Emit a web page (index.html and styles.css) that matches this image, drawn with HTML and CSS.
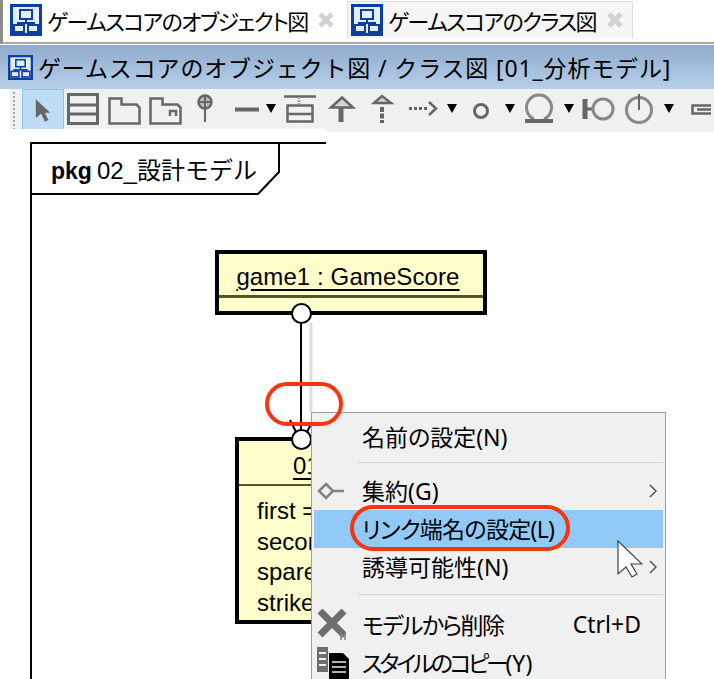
FILE: index.html
```html
<!DOCTYPE html>
<html lang="ja">
  <head>
    <meta charset="UTF-8" />
    <title>ゲームスコアのオブジェクト図</title>
    <link rel="stylesheet" href="styles.css">
  </head>
  <body>
    <svg class="defs" width="0" height="0">
      <symbol id="diagram" viewBox="0 0 32 32">
        <rect x="1.5" y="1.5" width="29" height="29" fill="#e4edf9" stroke="#0b3fa3" stroke-width="3" />
        <g fill="none" stroke="#0b3fa3" stroke-width="2">
          <rect x="10" y="6" width="12" height="9" />
          <path d="M16 15v4M8 21v-2h16v2" />
          <rect x="4" y="21" width="10" height="7" />
          <rect x="18" y="21" width="10" height="7" />
        </g>
      </symbol>
      <symbol id="close" viewBox="0 0 16 16">
        <path d="M2 2l12 12M14 2L2 14" stroke="#d2d2d2" stroke-width="5" />
      </symbol>
      <symbol id="drop" viewBox="0 0 10 9">
        <path d="M0 0h10L5 9z" fill="#000" />
      </symbol>
    </svg>

    <div class="app">
      <div class="tabs">
        <div class="tab tab-active">
          <svg class="tab-icon"><use href="#diagram" /></svg>
          <span class="tab-label">ゲームスコアのオブジェクト図</span>
          <svg class="tab-close"><use href="#close" /></svg>
        </div>
        <div class="tab tab-other">
          <svg class="tab-icon"><use href="#diagram" /></svg>
          <span class="tab-label">ゲームスコアのクラス図</span>
          <svg class="tab-close"><use href="#close" /></svg>
        </div>
      </div>

      <div class="titlebar">
        <svg class="title-icon"><use href="#diagram" /></svg>
        <span class="title-text">ゲームスコアのオブジェクト図 / クラス図 [01_分析モデル]</span>
      </div>

      <div class="toolbar">
        <span class="grip"></span>
        <span class="tool-selected">
          <svg width="18" height="24" viewBox="0 0 20 26"><path d="M2 1l16 15h-6l4 8-4 2-4-9-6 5z" fill="#666" /></svg>
        </span>
        <svg class="tool" width="44" height="40" viewBox="64 90 44 40"><path d="M68.500 95.500h29v29h-29zM68.500 106h29M68.500 115h29" /></svg>
        <svg class="tool" width="41" height="40" viewBox="108 90 41 40"><path d="M109.500 124.500v-25h12v6h15l3 3v16z" stroke-width="2.500" /></svg>
        <svg class="tool" width="41" height="40" viewBox="149 90 41 40"><path d="M150.500 124.500v-25h12v6h15l3 3v16zM170 117v-5h6v5" stroke-width="2.500" /></svg>
        <svg class="tool" width="36" height="40" viewBox="190 90 36 40"><circle cx="205" cy="103" r="6.500" fill="#bbb" stroke-width="2.500" /><path d="M205 109v14M199 103h12M205 97v12" stroke-width="2" /></svg>
        <svg class="tool" width="40" height="40" viewBox="226 90 40 40"><path d="M235 110.500h24" stroke-width="4" /></svg>
        <svg class="drop"><use href="#drop" /></svg>
        <svg class="tool" width="43" height="40" viewBox="281 90 43 40"><path d="M289 97.500h32" stroke-width="2.500" /><path d="M304 98v7" stroke="#aaa" stroke-width="3" stroke-dasharray="2 1" /><path d="M292.500 106.500h25v16h-25zM292.500 115h25" stroke-width="2.500" /></svg>
        <svg class="tool" width="40" height="40" viewBox="324 90 40 40"><path d="M336 108.500l11-10 11 10z" fill="#d4d4d4" stroke-width="2.500" /><path d="M346 109v14" stroke-width="5" /></svg>
        <svg class="tool" width="44" height="40" viewBox="364 90 44 40"><path d="M379 104l8-7 9 7z" fill="#d4d4d4" stroke-width="2.500" /><path d="M387 108v16" stroke-width="4" stroke-dasharray="5 1.500" /></svg>
        <svg class="tool" width="44" height="40" viewBox="408 90 44 40"><path d="M414 109.500h20" stroke-width="3" stroke-dasharray="3 2" /><path d="M434 103l7 6.500-7 6.500" stroke-width="2.500" /></svg>
        <svg class="drop"><use href="#drop" /></svg>
        <svg class="tool" width="48" height="40" viewBox="462 90 48 40"><circle cx="486" cy="112" r="6.500" /></svg>
        <svg class="drop"><use href="#drop" /></svg>
        <svg class="tool" width="49" height="40" viewBox="520 90 49 40"><path d="M539 120a12.500 12.500 0 1 1 10 0" stroke="#888" /><path d="M530 122h28" stroke-width="4" /></svg>
        <svg class="drop"><use href="#drop" /></svg>
        <svg class="tool" width="50" height="40" viewBox="578 90 50 40"><path d="M589 100v20" stroke-width="5" /><path d="M590 110h7" /><circle cx="607" cy="110" r="10" stroke="#888" /></svg>
        <svg class="tool" width="40" height="40" viewBox="628 90 40 40"><circle cx="643" cy="111" r="12.500" stroke="#888" /><path d="M643 95v16" stroke-width="2" /></svg>
        <svg class="drop"><use href="#drop" /></svg>
        <svg class="tool" width="37" height="40" viewBox="677 90 37 40"><path d="M695.500 106.500h30v8h-30zM700 110.500h20" stroke-width="2.500" /></svg>
      </div>

      <div class="canvas">
        <span class="canvas-top"></span>
        <svg class="frame" width="714" height="548" viewBox="0 131 714 548">
          <path d="M31 679V143h295" />
          <path d="M279 143v29l-21 22H31" />
          <path d="M311 323v89" class="shadow" />
          <path d="M301 320v110M290 420l6 12M311 424l-4 8" class="link" />
        </svg>

        <div class="pkg-name"><b>pkg</b><span class="pkg-title">02_設計モデル</span></div>

        <div class="node node-game">
          <div class="node-head"><u>game1 : GameScore</u></div>
        </div>
        <div class="node node-frame">
          <div class="node-head"><u>01</u></div>
          <div class="node-attrs">
            <div>first =</div>
            <div>second</div>
            <div>spare</div>
            <div>strike</div>
          </div>
        </div>
        <span class="port port-top"></span>
        <span class="port port-bottom"></span>
        <span class="mark mark-link"></span>
      </div>

      <div class="menu">
        <div class="menu-item">
          <span class="menu-icon"></span>
          <span class="menu-label">名前の設定(N)</span>
        </div>
        <div class="menu-sep"></div>
        <div class="menu-item">
          <span class="menu-icon">
            <svg width="28" height="18" viewBox="0 0 28 18"><path d="M9 2l7 7-7 7-7-7zM16 9h11" fill="none" stroke="#808080" stroke-width="2.500" /></svg>
          </span>
          <span class="menu-label">集約(G)</span>
          <svg class="menu-arrow" width="8" height="14" viewBox="0 0 8 14"><path d="M1 1l6 6-6 6" /></svg>
        </div>
        <div class="menu-item menu-item-active">
          <span class="menu-icon"></span>
          <span class="menu-label label-link">リンク端名の設定(L)</span>
        </div>
        <div class="menu-item">
          <span class="menu-icon"></span>
          <span class="menu-label">誘導可能性(N)</span>
          <svg class="menu-arrow" width="8" height="14" viewBox="0 0 8 14"><path d="M1 1l6 6-6 6" /></svg>
        </div>
        <div class="menu-sep menu-sep-wide"></div>
        <div class="menu-item">
          <span class="menu-icon">
            <svg width="32" height="32" viewBox="0 0 32 32"><path d="M3 2l24 24M27 2L3 26" stroke="#6e6e6e" stroke-width="7" /><path d="M24 31v-6l2 3 2-3v6" fill="none" stroke="#808080" stroke-width="1.500" /></svg>
          </span>
          <span class="menu-label label-delete">モデルから削除</span>
          <span class="menu-key">Ctrl+D</span>
        </div>
        <div class="menu-item">
          <span class="menu-icon">
            <svg width="32" height="32" viewBox="0 0 32 32"><path d="M0 0h11v25H0z" fill="#6e6e6e" /><path d="M2 6h7M2 12h7M2 18h7" stroke="#f0f0f0" stroke-width="2" /><path d="M12 6h14l6 6v20H12z" fill="#000" /><path d="M15 15h14M15 20h14M15 25h14" stroke="#f0f0f0" stroke-width="1.500" /></svg>
          </span>
          <span class="menu-label label-copy">スタイルのコピー<span class="label-key">(Y)</span></span>
        </div>
      </div>

      <span class="mark mark-item"></span>
      <svg class="pointer" width="26" height="38" viewBox="0 0 26 38"><path d="M1 1v33l8-7 6 10 5-3-6-10h11z" fill="#fff" stroke="#444" stroke-width="1.200" /></svg>
    </div>
  </body>
</html>
```

FILE: styles.css
```css
* {
  box-sizing: border-box;
}
html,
body {
  margin: 0;
  background: #fff;
}
.defs {
  position: absolute;
}
.app {
  position: relative;
  width: 714px;
  height: 679px;
  overflow: hidden;
  display: flex;
  flex-direction: column;
  font-family: "Noto Sans", "Noto Sans CJK JP", sans-serif;
  color: #000;
}

/* tabs */
.tabs {
  height: 44px;
  display: flex;
  gap: 7px;
  padding-left: 3px;
  border-left: 3px solid #8c8c8c;
  border-bottom: 2px solid #a9a9a9;
  margin-bottom: 1px;
}
.tab {
  display: flex;
  align-items: center;
  height: 37px;
  margin-top: 1px;
}
.tab-active {
  width: 334px;
  padding-left: 4px;
}
.tab-other {
  width: 286px;
  padding-left: 3px;
  background: #f5f5f5;
  border: 1px solid #dedede;
  border-bottom: 0;
}
.tab-icon {
  width: 32px;
  height: 32px;
  flex: none;
}
.tab-label {
  width: 265px;
  font-size: 22px;
  font-feature-settings: "palt";
  letter-spacing: -1.6px;
  margin-left: 5px;
  white-space: nowrap;
}
.tab-other .tab-label {
  width: 213px;
}
.tab-close {
  width: 16px;
  height: 16px;
  margin-left: 6px;
  flex: none;
}

/* window title */
.titlebar {
  height: 44px;
  display: flex;
  align-items: center;
  gap: 5px;
  padding-left: 8px;
  background: linear-gradient(#8fabcb, #b6cfea);
}
.title-icon {
  width: 25px;
  height: 25px;
  flex: none;
}
.title-text {
  font-size: 23px;
  letter-spacing: 0.85px;
  white-space: nowrap;
}

/* palette */
.toolbar {
  height: 43px;
  margin-bottom: -1px;
  display: flex;
  align-items: flex-start;
  margin-left: 10px;
  background: #f0f0f0;
}
.grip {
  width: 12px;
  height: 40px;
  margin-top: 2px;
  background: radial-gradient(circle, #a8a8a8 1px, transparent 1.2px) 2px 0 / 4px 4px repeat-y;
}
.tool-selected {
  width: 42px;
  height: 41px;
  flex: none;
  display: flex;
  align-items: center;
  justify-content: center;
  background: #bfdcf5;
  border: 1px solid #8cc4f5;
}
.tool {
  flex: none;
  fill: none;
  stroke: #666;
  stroke-width: 3;
}
.drop {
  width: 10px;
  height: 9px;
  flex: none;
  margin-top: 15px;
}

/* diagram */
.canvas {
  position: relative;
  flex: 1;
}
.canvas-top {
  position: absolute;
  left: 10px;
  top: -2px;
  width: 316px;
  height: 3px;
  background: #fff;
}
.frame {
  position: absolute;
  left: 0;
  top: 0;
  fill: none;
  stroke: #000;
  stroke-width: 2;
}
.frame .shadow {
  stroke: #dcdcdc;
  stroke-width: 3;
}
.pkg-name {
  position: absolute;
  left: 51px;
  top: 25px;
  font-family: "Liberation Sans", "Noto Sans CJK JP", sans-serif;
  font-size: 24px;
  line-height: 30px;
  white-space: nowrap;
}
.pkg-name b {
  font-size: 23px;
}
.pkg-title {
  margin-left: 5px;
}
.node {
  position: absolute;
  background: #ffffcc;
  border: 4px solid #000;
  font-family: "Liberation Sans", sans-serif;
  font-size: 24px;
}
.node u {
  text-underline-offset: 4px;
}
.node-game {
  left: 215px;
  top: 119px;
  width: 272px;
  height: 65px;
}
.node-game .node-head {
  height: 44px;
  padding-right: 6px;
  border-bottom: 3px solid #55552a;
  text-align: center;
  line-height: 46px;
  letter-spacing: 0.1px;
}
.node-frame {
  left: 235px;
  top: 306px;
  width: 200px;
  height: 187px;
}
.node-frame .node-head {
  height: 45px;
  border-bottom: 2px solid #55552a;
  padding-left: 54px;
  line-height: 50px;
}
.node-attrs {
  padding: 10px 0 0 18px;
  line-height: 30.500px;
}
.port {
  position: absolute;
  width: 21px;
  height: 21px;
  border-radius: 50%;
  background: #fff;
  border: 2px solid #000;
}
.port-top {
  left: 291px;
  top: 172px;
}
.port-bottom {
  left: 291px;
  top: 298px;
}
.mark {
  position: absolute;
  border: 4px solid #fb3410;
}
.mark-link {
  left: 265px;
  top: 251px;
  width: 78px;
  height: 44px;
  border-radius: 22px;
  z-index: 2;
}
.mark-item {
  left: 350px;
  top: 505px;
  width: 220px;
  height: 46px;
  border-radius: 23px;
  z-index: 2;
}

/* context menu */
.menu {
  position: absolute;
  left: 311px;
  top: 412px;
  width: 355px;
  height: 280px;
  padding: 5px 2px 0;
  background: #f0f0f0;
  border: 1px solid #a0a0a0;
}
.menu-item {
  display: flex;
  align-items: center;
  height: 38px;
  font-size: 23px;
  font-feature-settings: "palt";
  white-space: nowrap;
}
.menu-item-active {
  background: #91c9f7;
}
.menu-icon {
  width: 48px;
  flex: none;
  display: flex;
  align-items: center;
  padding-left: 3px;
}
.menu-label {
  flex: 1;
  padding-bottom: 2px;
}
.label-link {
  letter-spacing: -0.7px;
}
.label-delete {
  letter-spacing: -1.7px;
}
.label-copy {
  letter-spacing: -3.4px;
}
.label-key {
  letter-spacing: 0;
}
.menu-key {
  margin-right: 22px;
  padding-bottom: 2px;
}
.menu-arrow {
  margin-right: 6px;
  fill: none;
  stroke: #555;
  stroke-width: 1.500;
}
.menu-sep {
  height: 16px;
  margin-left: 44px;
  padding-top: 6px;
}
.menu-sep::before {
  content: "";
  display: block;
  border-top: 1px solid #d4d4d4;
}
.menu-sep-wide {
  height: 20px;
  padding-top: 8px;
}
.pointer {
  position: absolute;
  left: 617px;
  top: 540px;
  z-index: 3;
}
```
